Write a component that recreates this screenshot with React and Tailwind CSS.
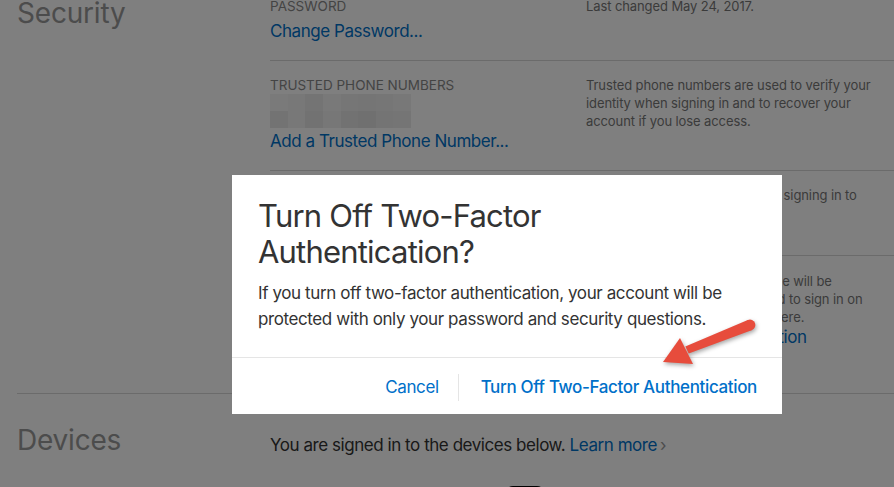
import React from "react";

const blur = [
  "#f4f4f4", "#f0f0f0", "#e8e8e8", "#f2f2f2", "#ececec", "#ebebeb", "#ededed", "#f1f1f1",
  "#e6e6e6", "#f0f0f0", "#e4e4e4", "#efefef", "#e4e4e4", "#e0e0e0", "#e9e9e9", "#eaeaea",
];

function Row({ left, right, className = "" }) {
  return (
    <div className={`flex border-b border-[#d6d6d6] ${className}`}>
      <div className="w-[316px] pt-[15px] pb-[18px]">{left}</div>
      <div className="w-[290px] pt-[15px] text-[13px] leading-[18px] tracking-[-0.1px] text-[#777]">{right}</div>
    </div>
  );
}

function Label({ children }) {
  return <div className="text-[13.5px] leading-[18px] uppercase text-[#888]">{children}</div>;
}

function Link({ children, className = "" }) {
  return (
    <a href="#" className={`block text-[17px] leading-[22px] tracking-[-0.45px] text-[#0070c9] ${className}`}>
      {children}
    </a>
  );
}

export default function App() {
  return (
    <div className="relative h-[487px] w-[894px] overflow-hidden bg-white" style={{ fontFamily: "Inter, 'Noto Sans', sans-serif" }}>
      <div className="-mt-[18px]">
        {/* Security */}
        <section className="ml-[17px] flex border-b border-[#d6d6d6]">
          <h2 className="w-[253px] pt-[15px] text-[28px] leading-[32px] tracking-[-0.2px] text-[#999]">Security</h2>
          <div className="flex-1">
            <Row
              left={
                <>
                  <Label>Password</Label>
                  <Link className="mt-[5px]">Change Password...</Link>
                </>
              }
              right={<p>Last changed May 24, 2017.</p>}
            />
            <Row
              left={
                <>
                  <Label>Trusted Phone Numbers</Label>
                  <div className="grid h-[34px] w-[141px] grid-cols-8 grid-rows-2">
                    {blur.map((c, i) => (
                      <div key={i} style={{ backgroundColor: c }} />
                    ))}
                  </div>
                  <Link className="mt-[2px]">Add a Trusted Phone Number...</Link>
                </>
              }
              right={
                <p>
                  Trusted phone numbers are used to verify your identity when signing in and to recover your account if you lose access.
                </p>
              }
            />
            <Row
              className="h-[85px]"
              left={
                <>
                  <Label>Trusted Devices</Label>
                  <Link className="mt-[5px]">View Trusted Devices...</Link>
                </>
              }
              right={
                <p className="whitespace-nowrap">
                  Use devices to get a code when signing in to
                  <br />
                  Apple.
                </p>
              }
            />
            <div className="flex h-[137px]">
              <div className="w-[316px] pt-[15px]">
                <Label>Two-Factor Authentication</Label>
                <p className="text-[17px] leading-[22px] tracking-[-0.45px] text-[#333]">On</p>
              </div>
              <div className="w-[290px] whitespace-nowrap pt-[16px] text-[13px] leading-[18px] tracking-[-0.1px] text-[#777]">
                <p>
                  As you sign in, a verification code will be
                  <br />
                  sent to the device you have used to sign in on
                  <br />
                  a new device or browser elsewhere.
                </p>
                <Link>Manage Account Verification</Link>
              </div>
            </div>
          </div>
        </section>

        {/* Devices */}
        <section className="ml-[17px] flex">
          <h2 className="w-[253px] pt-[30px] text-[28px] leading-[32px] tracking-[-0.2px] text-[#999]">Devices</h2>
          <div className="flex-1 pt-[40px]">
            <p className="text-[17px] leading-[22px] tracking-[-0.45px] text-[#333]">
              You are signed in to the devices below. <a href="#" className="text-[#0070c9]">Learn more</a>
              <span className="ml-[3px] text-[#999]">›</span>
            </p>
            <div className="ml-[235px] mt-[30px] h-[40px] w-[40px] rounded-t-[8px] bg-black" />
          </div>
        </section>
      </div>

      {/* overlay */}
      <div className="absolute inset-0 bg-black/50" />

      {/* dialog */}
      <div className="absolute left-[232px] top-[175px] w-[550px] bg-white">
        <div className="px-[26px] pt-[23px] pb-[25px]">
          <h1 className="text-[31px] leading-[36px] tracking-[-0.8px] text-[#333]">
            Turn Off Two-Factor
            <br />
            Authentication?
          </h1>
          <p className="mt-[10px] text-[17px] leading-[26px] tracking-[-0.4px] text-[#333]">
            If you turn off two-factor authentication, your account will be protected with only your password and security questions.
          </p>
        </div>
        <div className="flex h-[57px] items-center justify-end border-t border-[#e5e5e5] pr-[25px] pt-[3px]">
          <button className="text-[17px] tracking-[-0.4px] text-[#0070c9]">Cancel</button>
          <div className="ml-[19px] mr-[22px] h-[27px] w-px bg-[#e5e5e5]" />
          <button className="text-[17px] font-medium tracking-[-0.35px] text-[#0070c9]">Turn Off Two-Factor Authentication</button>
        </div>
      </div>

      {/* red arrow */}
      <svg className="absolute left-[650px] top-[305px]" width="110" height="70" viewBox="0 0 110 70" style={{ filter: "drop-shadow(1px 2px 2px rgba(0,0,0,0.35))" }}>
        <polygon points="35.3,41.4 38.7,48.6 102.2,25 97.8,15" fill="#e74c3c" />
        <circle cx="100" cy="20" r="5.4" fill="#e74c3c" />
        <polygon points="13,57 30,33 43,59" fill="#e74c3c" />
      </svg>
    </div>
  );
}
